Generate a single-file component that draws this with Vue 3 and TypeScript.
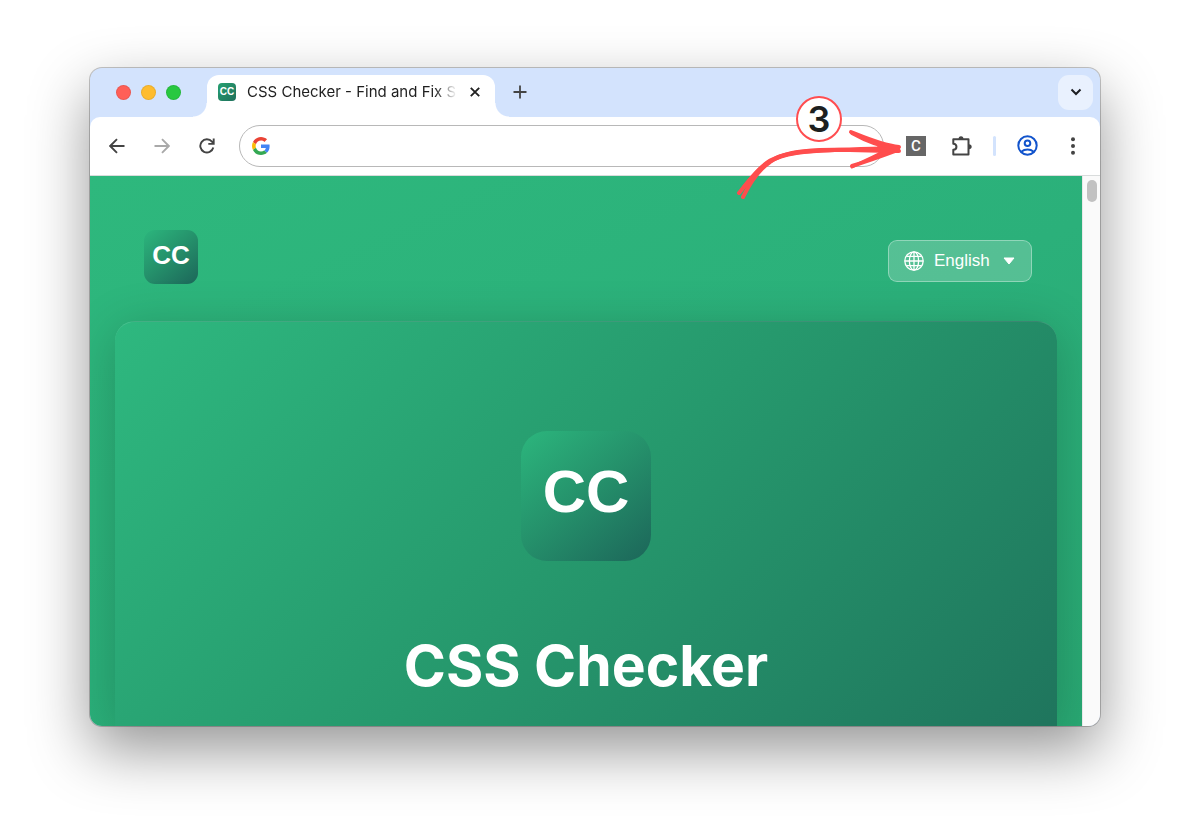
<script setup lang="ts">
import { ref } from 'vue'

const lights: string[] = ['red', 'yellow', 'green']
const address = ref('')
const language = ref('en')
const languages = [{ code: 'en', label: 'English' }]
</script>

<template>
  <div class="desktop">
    <div class="window">
      <div class="tabstrip">
        <div class="lights">
          <span v-for="c in lights" :key="c" class="light" :class="c"></span>
        </div>
        <div class="tab">
          <span class="favicon">CC</span>
          <span class="tab-title">CSS Checker - Find and Fix S</span>
          <button class="bare close" aria-label="Close tab">
            <svg width="12" height="12" viewBox="0 0 12 12"><path d="M1.8 1.8l8.4 8.4M10.2 1.8l-8.4 8.4" stroke="#222" stroke-width="1.9" /></svg>
          </button>
        </div>
        <button class="bare new-tab" aria-label="New tab">
          <svg width="14" height="14" viewBox="0 0 14 14"><path d="M7 .5v13M.5 7h13" stroke="#444" stroke-width="1.8" /></svg>
        </button>
        <button class="bare tab-search" aria-label="Search tabs">
          <svg width="12" height="8" viewBox="0 0 12 8"><path d="M1.500 1.500L6 6l4.500-4.500" fill="none" stroke="#1d1f23" stroke-width="2" /></svg>
        </button>
      </div>

      <div class="toolbar">
        <div class="nav">
          <button class="bare tool" aria-label="Back">
            <svg width="16" height="16" viewBox="0 0 16 16"><path d="M15.500 8H1.500M8 1.200L1.200 8 8 14.800" fill="none" stroke="#444" stroke-width="1.900" /></svg>
          </button>
          <button class="bare tool" aria-label="Forward">
            <svg width="16" height="16" viewBox="0 0 16 16"><path d="M.5 8h14M8 1.200L14.800 8 8 14.800" fill="none" stroke="#a9a9a9" stroke-width="1.900" /></svg>
          </button>
          <button class="bare tool" aria-label="Reload">
            <svg width="16" height="16" viewBox="0 0 16 16"><path d="M14.300 9.500A6.600 6.600 0 1 1 13 3.700L14.600 5.600M14.700.5v5.400H9.300" fill="none" stroke="#444" stroke-width="1.900" /></svg>
          </button>
        </div>
        <label class="omnibox">
          <svg width="18" height="18" viewBox="0 0 48 48">
            <path fill="#EA4335" d="M24 9.500c3.540 0 6.710 1.220 9.210 3.600l6.850-6.850C35.900 2.380 30.470 0 24 0 14.620 0 6.510 5.380 2.560 13.220l7.980 6.190C12.430 13.720 17.740 9.500 24 9.500z" />
            <path fill="#4285F4" d="M46.980 24.550c0-1.570-.15-3.090-.38-4.550H24v9.020h12.940c-.58 2.960-2.260 5.480-4.780 7.180l7.730 6c4.510-4.180 7.090-10.360 7.090-17.650z" />
            <path fill="#FBBC05" d="M10.530 28.590c-.48-1.450-.76-2.990-.76-4.590s.27-3.140.76-4.590l-7.980-6.190C.92 16.460 0 20.120 0 24s.92 7.540 2.560 10.780l7.970-6.190z" />
            <path fill="#34A853" d="M24 48c6.480 0 11.930-2.130 15.890-5.810l-7.730-6c-2.150 1.450-4.920 2.300-8.160 2.300-6.260 0-11.570-4.220-13.470-9.910l-7.980 6.190C6.510 42.620 14.620 48 24 48z" />
          </svg>
          <input v-model="address" type="text" aria-label="Address and search bar" />
        </label>
        <div class="actions">
          <div class="extension">
            <button class="bare tool" aria-label="CSS Checker extension">
              <span class="ext-icon">C</span>
            </button>
            <div class="callout">
              <svg width="175" height="120" viewBox="0 0 175 120" fill="none" stroke="#ff4d4d" stroke-linecap="round" stroke-linejoin="round">
                <path d="M9 103C17 93 25 82 34 75C43 67 55 64 70 62C100 59 135 59 168 58" stroke-width="4" />
                <path d="M13 107C20 93 28 80 40 72C52 63 70 61 90 60C115 59 145 61 169 61" stroke-width="4" />
                <path d="M14 97C21 89 28 79 39 72C53 63 76 61 105 60L165 60" stroke-width="4" />
                <path d="M121 42C136 48 152 55 169 57" stroke-width="4" />
                <path d="M122 43C138 52 152 57 168 59M122 76C138 71 152 66 168 60" stroke-width="4" />
                <path d="M122 77C136 70 148 65 156 60L168 60" stroke-width="3" />
                <path d="M148 55L168 59L150 64Z" fill="#ff4d4d" stroke-width="2" />
              </svg>
              <span class="step">3</span>
            </div>
          </div>
          <button class="bare tool" aria-label="Extensions">
            <svg width="22" height="22" viewBox="0 0 22 22">
              <path d="M3 4.300h14.500V19.500H2.300V14.800C6.500 14.500 6.500 9 2.300 8.700V4.300z" fill="none" stroke="#444" stroke-width="2" stroke-linejoin="round" />
              <path d="M7.500 4.200a2.500 2.900 0 0 1 5 0zM17.800 9.200a2.900 2.500 0 0 1 0 5z" fill="#444" />
            </svg>
          </button>
          <span class="divider"></span>
          <button class="bare tool" aria-label="Profile">
            <svg width="21" height="21" viewBox="0 0 21 21" fill="none" stroke="#1254cc" stroke-width="2">
              <circle cx="10.500" cy="10.500" r="9.200" /><circle cx="10.500" cy="8.300" r="2.800" /><path d="M4.300 16.800c3.600-3 8.800-3 12.400 0" />
            </svg>
          </button>
          <button class="bare tool" aria-label="Menu">
            <svg width="4" height="18" viewBox="0 0 4 18" fill="#444"><circle cx="2" cy="2.200" r="2" /><circle cx="2" cy="9" r="2" /><circle cx="2" cy="15.800" r="2" /></svg>
          </button>
        </div>
      </div>

      <div class="viewport">
        <div class="page">
          <header class="header">
            <a href="#" class="logo small">CC</a>
            <label class="language">
              <svg width="20" height="20" viewBox="0 0 20 20" fill="none" stroke="#fff" stroke-width="1.300">
                <circle cx="10" cy="10" r="9.200" /><ellipse cx="10" cy="10" rx="4.600" ry="9.200" />
                <path d="M10 .8v18.400M.8 10h18.400M2.500 5.300h15M2.500 14.700h15" />
              </svg>
              <select v-model="language" aria-label="Language">
                <option v-for="l in languages" :key="l.code" :value="l.code">{{ l.label }}</option>
              </select>
              <svg class="caret" width="12" height="8" viewBox="0 0 12 8"><path d="M1 1h10L6 7z" fill="#fff" stroke="#fff" stroke-linejoin="round" /></svg>
            </label>
          </header>
          <main class="hero">
            <div class="logo large">CC</div>
            <h1>CSS Checker</h1>
          </main>
        </div>
        <div class="scrollbar"><div class="thumb"></div></div>
      </div>
    </div>
  </div>
</template>

<style>
body {
  margin: 0;
  background: #fff;
}
</style>

<style scoped>
* {
  box-sizing: border-box;
}
.desktop {
  min-height: 100vh;
  padding: 68px 90px 112px;
  display: grid;
  font-family: Inter, "Liberation Sans", sans-serif;
}
.window {
  display: flex;
  flex-direction: column;
  min-width: 0;
  border-radius: 12px;
  overflow: hidden;
  background: #d3e3fd;
  box-shadow: 0 0 0 1px rgba(0, 0, 0, 0.22), 0 24px 60px rgba(0, 0, 0, 0.42);
}
.bare {
  border: 0;
  padding: 0;
  background: none;
  display: flex;
  align-items: center;
  justify-content: center;
}
.tabstrip {
  display: flex;
  align-items: center;
  height: 49px;
  padding: 7px 7px 8px 26px;
}
.lights {
  display: flex;
  gap: 10px;
  margin-right: 26px;
}
.light {
  width: 15px;
  height: 15px;
  border-radius: 50%;
  border: 1px solid rgba(0, 0, 0, 0.08);
}
.red { background: #ff5f57; }
.yellow { background: #febc2e; }
.green { background: #28c840; }
.tab {
  position: relative;
  display: flex;
  align-items: center;
  width: 288px;
  height: 42px;
  margin-bottom: -8px;
  padding: 0 13px 8px 11px;
  background: #fff;
  border-radius: 12px 12px 0 0;
}
.tab::before,
.tab::after {
  content: "";
  position: absolute;
  bottom: 0;
  width: 14px;
  height: 14px;
}
.tab::before {
  right: 100%;
  background: radial-gradient(circle at 0 0, transparent 13px, #fff 14px);
}
.tab::after {
  left: 100%;
  background: radial-gradient(circle at 100% 0, transparent 13px, #fff 14px);
}
.favicon {
  width: 18px;
  height: 18px;
  border-radius: 4px;
  background: linear-gradient(135deg, #27a070, #1f705c);
  color: #fff;
  font: bold 10px/18px "Liberation Sans", Arial, sans-serif;
  text-align: center;
}
.tab-title {
  flex: 1;
  margin: 0 8px 0 11px;
  white-space: nowrap;
  font-size: 15px;
  line-height: 20px;
  color: #1f1f1f;
  mask-image: linear-gradient(to right, #000 188px, transparent 210px);
}
.close {
  width: 14px;
  height: 20px;
}
.new-tab {
  width: 28px;
  height: 28px;
  margin-left: 11px;
}
.tab-search {
  width: 35px;
  height: 35px;
  margin-left: auto;
  border-radius: 11px;
  background: #e9f1fe;
}
.toolbar {
  display: flex;
  align-items: center;
  height: 59px;
  padding: 0 11px 1px;
  background: #fff;
  border-bottom: 1px solid #d9dcdc;
  border-radius: 10px 10px 0 0;
}
.nav {
  display: flex;
  gap: 13px;
}
.tool {
  width: 32px;
  height: 32px;
}
.omnibox {
  flex: 1;
  display: flex;
  align-items: center;
  gap: 12px;
  height: 42px;
  margin: 0 16px;
  padding: 0 12px;
  border: 1px solid #b8b8b8;
  border-radius: 21px;
}
.omnibox input {
  flex: 1;
  min-width: 0;
  border: 0;
  outline: 0;
  background: none;
  font: 15px/20px Inter, sans-serif;
}
.actions {
  display: flex;
  align-items: center;
  gap: 14px;
}
.extension {
  position: relative;
}
.ext-icon {
  width: 20px;
  height: 20px;
  background: #666;
  color: #fff;
  font: 500 15px/20px Roboto, Arial, sans-serif;
  text-align: center;
}
.callout {
  position: absolute;
  left: -170px;
  top: -40px;
  z-index: 5;
  pointer-events: none;
}
.callout svg {
  display: block;
}
.step {
  position: absolute;
  left: 66px;
  top: 6px;
  width: 46px;
  height: 46px;
  border: 2px solid #ff4d50;
  border-radius: 50%;
  background: #fff;
  color: #1d1f1f;
  font: 600 36px/42px Inter, sans-serif;
  text-align: center;
}
.divider {
  width: 3px;
  height: 20px;
  margin: 0 1px;
  border-radius: 2px;
  background: #d3e3fd;
}
.viewport {
  flex: 1;
  display: flex;
  min-height: 0;
}
.page {
  flex: 1;
  display: flex;
  flex-direction: column;
  overflow: hidden;
  background: linear-gradient(155deg, #2eb87d 0%, #2bb07a 50%, #29a873 100%);
}
.header {
  display: flex;
  align-items: center;
  justify-content: space-between;
  padding: 54px 50px 37px 54px;
}
.logo {
  display: flex;
  align-items: center;
  justify-content: center;
  background: linear-gradient(140deg, #2bb27b 5%, #25916b 48%, #1d6a5b 95%);
  color: #fff;
  font-family: "Liberation Sans", Arial, sans-serif;
  font-weight: bold;
  text-decoration: none;
}
.small {
  width: 54px;
  height: 54px;
  padding-bottom: 4px;
  border-radius: 11px;
  font-size: 26px;
}
.large {
  width: 130px;
  height: 130px;
  padding-bottom: 10px;
  border-radius: 26px;
  font-size: 60px;
}
.language {
  display: flex;
  align-items: center;
  height: 42px;
  margin-top: 8px;
  padding: 0 16px 0 15px;
  border: 1px solid rgba(255, 255, 255, 0.35);
  border-radius: 9px;
  background: rgba(255, 255, 255, 0.2);
}
.language select {
  appearance: none;
  margin: 0 13px 0 10px;
  padding: 0;
  border: 0;
  outline: 0;
  background: none;
  color: #fff;
  font: 17px/24px "Liberation Sans", Arial, sans-serif;
}
.hero {
  flex: 1;
  display: flex;
  flex-direction: column;
  align-items: center;
  margin: 0 25px;
  padding-top: 109px;
  border-top: 1px solid rgba(255, 255, 255, 0.12);
  border-radius: 20px 20px 0 0;
  background: linear-gradient(135deg, #2eb87f 0%, #26996d 50%, #1f755d 100%);
  box-shadow: 0 8px 50px rgba(0, 0, 0, 0.2);
}
h1 {
  margin: 70px 0 0;
  color: #fff;
  font-size: 57px;
  line-height: 70px;
  font-weight: 700;
}
.scrollbar {
  width: 18px;
  padding: 4px 3px 0 4px;
  background: #fafafa;
  border-left: 1px solid #e8e8e8;
}
.thumb {
  height: 22px;
  border-radius: 5px;
  background: #c1c1c1;
}
</style>
